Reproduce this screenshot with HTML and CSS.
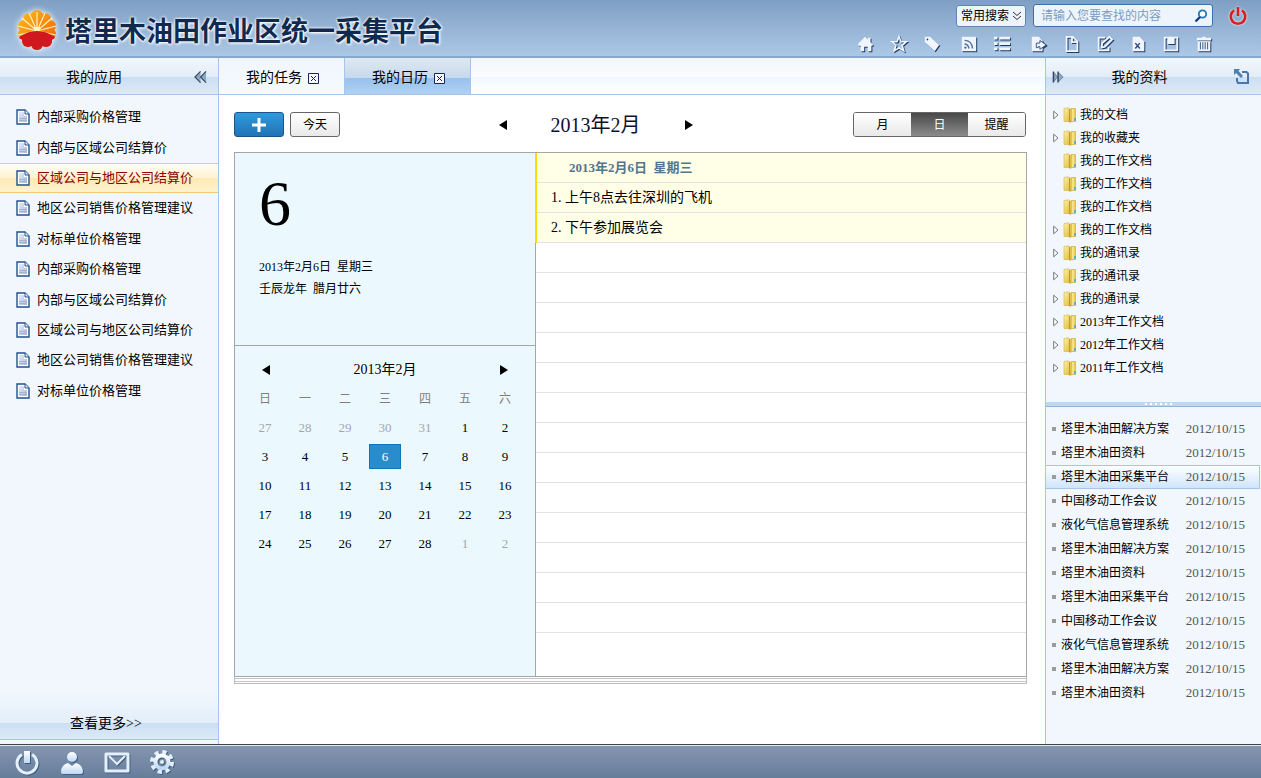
FILE: index.html
```html
<!DOCTYPE html>
<html lang="zh-CN">
<head>
  <meta charset="UTF-8">
  <meta name="viewport" content="width=device-width, initial-scale=1.0">
  <title>塔里木油田作业区统一采集平台</title>
  <link rel="stylesheet" href="styles.css">
</head>
<body>
<svg class="defs" aria-hidden="true">
  <linearGradient id="g-doc" x1="0" y1="0" x2="1" y2="1">
    <stop offset="0" stop-color="#e6ecf6"/><stop offset="1" stop-color="#a9b9d5"/>
  </linearGradient>
  <linearGradient id="g-folder" x1="0" y1="0" x2="1" y2="1">
    <stop offset="0" stop-color="#fff3a8"/><stop offset="1" stop-color="#d9b52c"/>
  </linearGradient>
  <linearGradient id="g-orange" gradientUnits="userSpaceOnUse" x1="8" y1="3" x2="40" y2="34">
    <stop offset="0" stop-color="#ffb81c"/><stop offset="1" stop-color="#f0690a"/>
  </linearGradient>
  <linearGradient id="g-foot" x1="0" y1="0" x2="0" y2="1">
    <stop offset="0" stop-color="#fff"/><stop offset="1" stop-color="#bcd8f5"/>
  </linearGradient>
  <clipPath id="sun">
    <path d="M2 46V35Q5 29 9 28 16 24 23 24t14 4q4 1 7 7v11z"/>
  </clipPath>
  <g id="petals">
    <circle cx="23" cy="23" r="15"/>
    <circle cx="23" cy="9" r="6"/><circle cx="31" cy="12" r="6"/><circle cx="15" cy="12" r="6"/>
    <circle cx="36" cy="19" r="6"/><circle cx="10" cy="19" r="6"/><circle cx="36" cy="27" r="6"/><circle cx="10" cy="27" r="6"/>
    <circle cx="32" cy="34" r="6"/><circle cx="14" cy="34" r="6"/><circle cx="23" cy="37" r="6"/>
  </g>
  <symbol id="doc" viewBox="0 0 14 16">
    <path d="M1 1h8l4 4v10H1z" fill="#fff" stroke="#22508c" stroke-width="1.4"/>
    <path d="M3 3h5v4h3v6H3z" fill="url(#g-doc)"/>
    <path d="M9 1v4h4" fill="#e6eefa" stroke="#22508c"/>
    <path d="M3 9.500h8M3 11.500h8" stroke="#a3b5d0"/>
  </symbol>
  <symbol id="folder" viewBox="0 0 14 16">
    <path d="M8 1.500h4.500v13H7z" fill="#e8cd58" stroke="#c9a53a" stroke-width=".6"/>
    <path d="M10 2v12" stroke="#fff6bd"/>
    <path d="M1 1.500 5.500.8 8 3v12.500L5 14.500H1z" fill="url(#g-folder)" stroke="#d2b04a" stroke-width=".6"/>
    <path d="M6.500 2v13" stroke="#c39a2a"/>
    <path d="M12 11v3" stroke="#3ba4e8" stroke-width="1.500"/>
  </symbol>
  <symbol id="arrow" viewBox="0 0 6 10">
    <path d="M.7 1.200v7.600L5 5z" fill="#fff" stroke="#777"/>
  </symbol>
  <symbol id="close" viewBox="0 0 11 11">
    <path d="M.5.5h10v10H.5z" fill="#f4f8ff" stroke="#1c2460"/>
    <path d="M3 3l5 5M8 3 3 8" stroke="#1c2460"/>
  </symbol>
</svg>

<header class="header">
  <div class="brand">
    <svg class="logo" viewBox="0 0 46 46">
      <use href="#petals" fill="url(#g-orange)"/>
      <g stroke="#fff3c0" stroke-width="1.200">
        <path d="M23 24V5M23 24 15 6M23 24 31 6M23 24 8 11M23 24 38 11M23 24 4 19M23 24 42 19M23 24 4 28M23 24 42 28"/>
      </g>
      <path d="M23 25l-4-5h8z" fill="#fff3c0"/>
      <use href="#petals" fill="#cf1820" clip-path="url(#sun)"/>
    </svg>
    <h1>塔里木油田作业区统一采集平台</h1>
  </div>
  <div class="tools">
    <form class="search" onsubmit="return false;">
      <div class="select-box">
        <select aria-label="搜索类型"><option>常用搜索</option></select>
        <svg viewBox="0 0 10 10"><path d="M1 1l4 3.500L9 1M1 5l4 3.500L9 5" fill="none" stroke="#333"/></svg>
      </div>
      <div class="search-box">
        <input type="text" aria-label="搜索" placeholder="请输入您要查找的内容">
        <button type="submit" aria-label="查找">
          <svg viewBox="0 0 14 14"><circle cx="8.500" cy="5" r="3.700" fill="#fff" stroke="#2277bb" stroke-width="1.800"/><path d="M6 8l-4.500 4.500" stroke="#16407c" stroke-width="2.400"/></svg>
        </button>
      </div>
      <button class="logout" aria-label="退出">
        <svg viewBox="0 0 18 18"><path d="M5.500 4a6.500 6.500 0 1 0 7 0" fill="none" stroke="#d81e1e" stroke-width="2.400"/><path d="M9 1v8" stroke="#d81e1e" stroke-width="2.400"/></svg>
      </button>
    </form>
    <nav class="icons">
      <div class="group">
        <button aria-label="首页"><svg viewBox="0 0 20 20"><path d="M1 10 9 2l3 3V3h3v5l3 3-1 1h-1v6h-4v-5H8v5H4v-6H2z"/></svg></button>
        <button aria-label="收藏"><svg viewBox="0 0 20 20"><path d="M10 2l2.300 5.500H18l-4.500 4 1.700 6L10 14.300 4.800 17.500l1.700-6L2 7.500h5.700z" fill="none" stroke="#f0f5fc" stroke-width="1.800"/></svg></button>
        <button aria-label="标签"><svg viewBox="0 0 20 20"><path fill-rule="evenodd" d="M2 2h6l10 9-5 7L2 8zM5 4a1 1 0 1 0 1 1A1 1 0 0 0 5 4z"/></svg></button>
      </div>
      <div class="group">
        <button aria-label="订阅"><svg viewBox="0 0 20 20"><path d="M2 2h16v16H2z"/><path d="M5 6q8 0 9 9M5 10q4 0 5 5" fill="none" stroke="#54749f" stroke-width="1.600"/><circle cx="6" cy="14" r="1.300" fill="#54749f"/></svg></button>
        <button aria-label="列表"><svg viewBox="0 0 20 20"><path d="M1 2h4v3H1zM7 2h12v3H7zM1 8h4v3H1zM7 8h12v3H7zM1 14h4v3H1zM7 14h12v3H7z"/></svg></button>
      </div>
      <div class="group">
        <button aria-label="导出"><svg viewBox="0 0 20 20"><path d="M2 2h8l4 4v12H2z"/><path d="M7 14V9h4V6l7 5-7 5v-3H9v1z" stroke="#2b4a78"/></svg></button>
        <button aria-label="新建"><svg viewBox="0 0 20 20"><path d="M4 2h7l5 5v11H4z" fill="none" stroke="#f0f5fc" stroke-width="2"/><path d="M10 2v6h6" fill="none" stroke="#f0f5fc" stroke-width="2"/></svg></button>
        <button aria-label="编辑"><svg viewBox="0 0 20 20"><path d="M10 3H3v14h11v-4" fill="none" stroke="#f0f5fc" stroke-width="2"/><path d="M7 9l8-7 3 3-8 8-4 1z" fill="none" stroke="#f0f5fc" stroke-width="2"/></svg></button>
        <button aria-label="表格"><svg viewBox="0 0 20 20"><path d="M4 2h8l5 5v11H4z"/><path d="M7 9l5 6M12 9l-5 6" stroke="#2b4a78" stroke-width="1.600"/></svg></button>
        <button aria-label="保存"><svg viewBox="0 0 20 20"><path fill-rule="evenodd" d="M2 2h16v16H2zM4 4v12h12V4h-2v6H6V4z"/><path d="M8 2h2v6H8z"/></svg></button>
        <button aria-label="删除"><svg viewBox="0 0 20 20"><path d="M2 3h6V2h4v1h6v3H2zM3 7h14v11H3z"/><path d="M6 8v8M8.700 8v8M11.300 8v8M14 8v8" stroke="#2b4a78"/></svg></button>
      </div>
    </nav>
  </div>
</header>

<div class="layout">
  <aside class="apps">
    <div class="bar">
      <h2>我的应用</h2>
      <button class="bar-right" aria-label="收起"><svg class="fold" viewBox="0 0 14 12"><path d="M7 0v12L1 6zM13 0v12L7 6z" fill="#8fa8c4"/><path d="M7 0 1 6l6 6M13 0 7 6l6 6" fill="none" stroke="#34465c" stroke-width="1.200"/></svg></button>
    </div>
    <ul class="app-list">
      <li><a href="#"><svg><use href="#doc"/></svg>内部采购价格管理</a></li>
      <li><a href="#"><svg><use href="#doc"/></svg>内部与区域公司结算价</a></li>
      <li class="active"><a href="#"><svg><use href="#doc"/></svg>区域公司与地区公司结算价</a></li>
      <li><a href="#"><svg><use href="#doc"/></svg>地区公司销售价格管理建议</a></li>
      <li><a href="#"><svg><use href="#doc"/></svg>对标单位价格管理</a></li>
      <li><a href="#"><svg><use href="#doc"/></svg>内部采购价格管理</a></li>
      <li><a href="#"><svg><use href="#doc"/></svg>内部与区域公司结算价</a></li>
      <li><a href="#"><svg><use href="#doc"/></svg>区域公司与地区公司结算价</a></li>
      <li><a href="#"><svg><use href="#doc"/></svg>地区公司销售价格管理建议</a></li>
      <li><a href="#"><svg><use href="#doc"/></svg>对标单位价格管理</a></li>
    </ul>
    <a class="more" href="#">查看更多&gt;&gt;</a>
  </aside>

  <main class="main">
    <nav class="tabs">
      <div class="tab"><a href="#">我的任务</a><button aria-label="关闭"><svg><use href="#close"/></svg></button></div>
      <div class="tab active"><a href="#">我的日历</a><button aria-label="关闭"><svg><use href="#close"/></svg></button></div>
    </nav>
    <div class="content">
      <div class="toolbar">
        <div class="left">
          <button class="btn add" aria-label="添加"><svg viewBox="0 0 14 14"><path d="M7 0v14M0 7h14" stroke="#fff" stroke-width="3"/></svg></button>
          <button class="btn">今天</button>
        </div>
        <div class="month">
          <button aria-label="上个月"><svg viewBox="0 0 8 10"><path d="M8 0v10L0 5z"/></svg></button>
          <span>2013年2月</span>
          <button aria-label="下个月"><svg viewBox="0 0 8 10"><path d="M0 0v10l8-5z"/></svg></button>
        </div>
        <div class="views">
          <button>月</button><button class="active">日</button><button>提醒</button>
        </div>
      </div>

      <div class="book">
        <section class="side">
          <div class="today">
            <div class="day">6</div>
            <p>2013年2月6日&nbsp; 星期三</p>
            <p>壬辰龙年&nbsp; 腊月廿六</p>
          </div>
          <div class="mini">
            <div class="mini-nav">
              <button aria-label="上个月"><svg viewBox="0 0 8 10"><path d="M8 0v10L0 5z"/></svg></button>
              <span>2013年2月</span>
              <button aria-label="下个月"><svg viewBox="0 0 8 10"><path d="M0 0v10l8-5z"/></svg></button>
            </div>
            <table>
              <thead>
                <tr><th>日</th><th>一</th><th>二</th><th>三</th><th>四</th><th>五</th><th>六</th></tr>
              </thead>
              <tbody>
                <tr><td class="out">27</td><td class="out">28</td><td class="out">29</td><td class="out">30</td><td class="out">31</td><td>1</td><td>2</td></tr>
                <tr><td>3</td><td>4</td><td>5</td><td><span class="selected">6</span></td><td>7</td><td>8</td><td>9</td></tr>
                <tr><td>10</td><td>11</td><td>12</td><td>13</td><td>14</td><td>15</td><td>16</td></tr>
                <tr><td>17</td><td>18</td><td>19</td><td>20</td><td>21</td><td>22</td><td>23</td></tr>
                <tr><td>24</td><td>25</td><td>26</td><td>27</td><td>28</td><td class="out">1</td><td class="out">2</td></tr>
              </tbody>
            </table>
          </div>
        </section>
        <section class="agenda">
          <div class="events">
            <h3>2013年2月6日&nbsp; 星期三</h3>
            <p>1. 上午8点去往深圳的飞机</p>
            <p>2. 下午参加展览会</p>
          </div>
        </section>
      </div>
      <div class="pages"></div>
    </div>
  </main>

  <aside class="files">
    <div class="bar">
      <button class="bar-left" aria-label="展开"><svg class="fold" viewBox="0 0 14 12"><path d="M2 1v10l4-5zM7 1v10l5-5z" fill="#8fa8c4" stroke="#5d7896" stroke-width=".8"/><path d="M1.500 0v12M6.500 0v12" stroke="#34465c" stroke-width="1.500"/></svg></button>
      <h2>我的资料</h2>
      <button class="bar-right" aria-label="弹出"><svg class="popout" viewBox="0 0 16 16"><path d="M8 3h4.500l1.500 1.500V14H4L3 12V9" fill="none" stroke="#4878ab" stroke-width="2"/><path d="M0 0h6L4.500 2 9 7 7 9 2 4 0 6z" fill="#4f80b3"/></svg></button>
    </div>
    <ul class="tree">
      <li><svg class="twig"><use href="#arrow"/></svg><svg class="folder"><use href="#folder"/></svg><a href="#">我的文档</a></li>
      <li><svg class="twig"><use href="#arrow"/></svg><svg class="folder"><use href="#folder"/></svg><a href="#">我的收藏夹</a></li>
      <li><svg class="twig"></svg><svg class="folder"><use href="#folder"/></svg><a href="#">我的工作文档</a></li>
      <li><svg class="twig"></svg><svg class="folder"><use href="#folder"/></svg><a href="#">我的工作文档</a></li>
      <li><svg class="twig"></svg><svg class="folder"><use href="#folder"/></svg><a href="#">我的工作文档</a></li>
      <li><svg class="twig"><use href="#arrow"/></svg><svg class="folder"><use href="#folder"/></svg><a href="#">我的工作文档</a></li>
      <li><svg class="twig"><use href="#arrow"/></svg><svg class="folder"><use href="#folder"/></svg><a href="#">我的通讯录</a></li>
      <li><svg class="twig"><use href="#arrow"/></svg><svg class="folder"><use href="#folder"/></svg><a href="#">我的通讯录</a></li>
      <li><svg class="twig"><use href="#arrow"/></svg><svg class="folder"><use href="#folder"/></svg><a href="#">我的通讯录</a></li>
      <li><svg class="twig"><use href="#arrow"/></svg><svg class="folder"><use href="#folder"/></svg><a href="#">2013年工作文档</a></li>
      <li><svg class="twig"><use href="#arrow"/></svg><svg class="folder"><use href="#folder"/></svg><a href="#">2012年工作文档</a></li>
      <li><svg class="twig"><use href="#arrow"/></svg><svg class="folder"><use href="#folder"/></svg><a href="#">2011年工作文档</a></li>
    </ul>
    <div class="splitter"><i></i><i></i><i></i><i></i><i></i><i></i></div>
    <ul class="news">
      <li><a href="#">塔里木油田解决方案</a><time>2012/10/15</time></li>
      <li><a href="#">塔里木油田资料</a><time>2012/10/15</time></li>
      <li class="active"><a href="#">塔里木油田采集平台</a><time>2012/10/15</time></li>
      <li><a href="#">中国移动工作会议</a><time>2012/10/15</time></li>
      <li><a href="#">液化气信息管理系统</a><time>2012/10/15</time></li>
      <li><a href="#">塔里木油田解决方案</a><time>2012/10/15</time></li>
      <li><a href="#">塔里木油田资料</a><time>2012/10/15</time></li>
      <li><a href="#">塔里木油田采集平台</a><time>2012/10/15</time></li>
      <li><a href="#">中国移动工作会议</a><time>2012/10/15</time></li>
      <li><a href="#">液化气信息管理系统</a><time>2012/10/15</time></li>
      <li><a href="#">塔里木油田解决方案</a><time>2012/10/15</time></li>
      <li><a href="#">塔里木油田资料</a><time>2012/10/15</time></li>
    </ul>
  </aside>
</div>

<footer class="footer">
  <button aria-label="注销"><svg viewBox="0 0 26 26"><path d="M8 4.500a10 10 0 1 0 10 0" fill="none" stroke="#e4effb" stroke-width="3"/><path d="M10 1h6v12h-6z" fill="url(#g-foot)"/></svg></button>
  <button aria-label="用户"><svg viewBox="0 0 26 26"><circle cx="13" cy="7" r="5" fill="url(#g-foot)"/><path d="M2 22q0-7 7-9l4 3 4-3q7 2 7 9 0 2-2 2H4q-2 0-2-2z" fill="url(#g-foot)"/></svg></button>
  <button aria-label="邮件"><svg viewBox="0 0 26 26"><path d="M2 4h22v17H2z" fill="none" stroke="#e4effb" stroke-width="3" stroke-linejoin="round"/><path d="M5 6l8 8 8-8" fill="none" stroke="#e4effb" stroke-width="2"/></svg></button>
  <button aria-label="设置"><svg viewBox="0 0 26 26"><circle cx="13" cy="12" r="10" fill="none" stroke="#e4effb" stroke-width="4" stroke-dasharray="4.200 3.654"/><circle cx="13" cy="12" r="6.500" fill="none" stroke="url(#g-foot)" stroke-width="4"/><circle cx="13" cy="12" r="2" fill="#e4effb"/></svg></button>
</footer>
</body>
</html>
```

FILE: styles.css
```css
* {
  box-sizing: border-box;
}
body {
  display: flex;
  flex-direction: column;
  margin: 0;
  min-height: 100vh;
  font: 12px/20px "Liberation Serif", "Noto Sans CJK SC", serif;
  color: #000;
  background-color: #fff;
}
h1, h2, h3, p, ul {
  margin: 0;
  padding: 0;
  list-style: none;
}
a {
  color: inherit;
  text-decoration: none;
}
button {
  padding: 0;
  border: none;
  background: none;
  font: inherit;
  cursor: pointer;
}
svg {
  display: block;
  flex: none;
}
.defs {
  position: absolute;
  width: 0;
  height: 0;
}

/* header */
.header {
  display: flex;
  justify-content: space-between;
  height: 58px;
  border-bottom: 2px solid #86a8cd;
  background: linear-gradient(#7e9fc3, #adc8e7);
}
.brand {
  display: flex;
  align-items: center;
  gap: 5px;
  padding: 4px 0 0 14px;
}
.logo {
  width: 46px;
  height: 46px;
  filter: drop-shadow(0 0 3px #fff);
}
.brand h1 {
  padding-top: 4px;
  font-size: 27px;
  line-height: 40px;
  font-weight: bold;
  white-space: nowrap;
  color: #10294f;
  text-shadow: 0 0 2px #fff, 0 0 3px #fff, 1px 1px 3px #fff;
}
.tools {
  display: flex;
  flex-direction: column;
  gap: 8px;
  padding-top: 4px;
}
.search {
  display: flex;
  align-items: center;
  justify-content: flex-end;
  gap: 7px;
  padding-right: 13px;
}
.select-box {
  position: relative;
}
.select-box svg {
  position: absolute;
  right: 4px;
  top: 6px;
  width: 10px;
  height: 10px;
  pointer-events: none;
}
.select-box select {
  display: block;
  width: 70px;
  height: 22px;
  padding: 0 4px;
  appearance: none;
  border: 1px solid #5f86b3;
  border-radius: 3px;
  background-color: #eef4fc;
  color: #000;
  font: inherit;
}
.search-box {
  display: flex;
  align-items: center;
  width: 180px;
  height: 23px;
  padding: 0 4px 0 7px;
  border: 1px solid #3d6ea5;
  border-radius: 3px;
  background-color: #eef4fc;
}
.search-box input {
  flex: 1;
  min-width: 0;
  padding: 0;
  border: none;
  outline: none;
  background: none;
  font: inherit;
}
.search-box input::placeholder {
  color: #7c9cbf;
}
.search-box svg {
  width: 14px;
  height: 14px;
}
.logout {
  margin-left: 8px;
}
.logout svg {
  width: 20px;
  height: 20px;
  filter: drop-shadow(0 0 1px #fff);
}
.icons {
  display: flex;
  gap: 17px;
  padding-right: 47px;
}
.group {
  display: flex;
  gap: 13px;
}
.group svg {
  width: 20px;
  height: 18px;
  fill: #f0f5fc;
  filter: drop-shadow(1px 1px 0 #1f3a66);
}

/* columns */
.layout {
  flex: 1;
  display: flex;
}
.bar {
  position: relative;
  height: 37px;
  border-bottom: 1px solid #a5c6ea;
  background: linear-gradient(#f1f6fc, #e3edf8 52%, #cadef3 52%, #deeaf7);
}
.bar h2 {
  font-size: 14px;
  line-height: 40px;
  font-weight: normal;
  text-align: center;
}
.bar-left, .bar-right {
  position: absolute;
  top: 11px;
}
.bar-left {
  left: 6px;
}
.bar-right {
  right: 11px;
}
.fold {
  width: 13px;
  height: 16px;
}
.popout {
  width: 16px;
  height: 16px;
}

/* left */
.apps {
  display: flex;
  flex-direction: column;
  width: 219px;
  border-right: 1px solid #a5c6ea;
  background-color: #f2f7fe;
}
.apps h2 {
  padding-right: 30px;
}
.app-list {
  display: grid;
  grid-auto-rows: 1fr;
  height: 304px;
  margin-top: 7px;
}
.app-list li {
  display: flex;
  align-items: center;
  border: solid transparent;
  border-width: 1px 0;
}
.app-list a {
  display: flex;
  align-items: center;
  gap: 7px;
  padding-left: 16px;
  font-size: 13px;
}
.app-list svg {
  width: 14px;
  height: 16px;
}
.app-list .active {
  border-color: #f0c878;
  background: linear-gradient(#fffdf5, #fff2d2 50%, #fde9b4 50%, #fff3cc);
  color: #8b0000;
}
.more {
  margin-top: auto;
  margin-bottom: 4px;
  padding: 21px 6px 3px 0;
  border-bottom: 1px solid #a5c6ea;
  background: linear-gradient(#f2f7fe, #e3eef9 66%, #cadff3 66%, #dce9f7);
  font-size: 14px;
  line-height: 24px;
  text-align: center;
}

/* center */
.main {
  flex: 1;
  display: flex;
  flex-direction: column;
}
.tabs {
  display: flex;
  height: 37px;
  border-bottom: 1px solid #a5c6ea;
  background: linear-gradient(#f3f6f8, #fafcfe 52%, #f1f8ff 52%, #fff);
}
.tab {
  display: flex;
  align-items: center;
  justify-content: center;
  gap: 6px;
  width: 126px;
  padding: 4px 0 0 2px;
  border-right: 1px solid #a5c6ea;
  background: linear-gradient(#f0f6fc, #f6fafe);
  font-size: 14px;
}
.tab.active {
  background: linear-gradient(#e0e8f1, #c6d9ee 55%, #98c1ee 55%, #b0d1f4);
}
.tab svg {
  width: 11px;
  height: 11px;
}
.content {
  flex: 1;
  display: flex;
  flex-direction: column;
  padding: 17px 18px 60px 15px;
}
.toolbar {
  display: grid;
  grid-template-columns: 1fr auto 1fr;
  align-items: center;
  margin-bottom: 15px;
}
.left {
  display: flex;
  gap: 6px;
}
.btn {
  display: flex;
  align-items: center;
  justify-content: center;
  width: 50px;
  height: 25px;
  border: 1px solid #666;
  border-radius: 3px;
  background: linear-gradient(#fff, #e9e9ea);
}
.btn.add {
  border-color: #1a5488;
  background: linear-gradient(#2f9ade, #2173b4);
}
.btn svg {
  width: 14px;
  height: 14px;
}
.month {
  display: flex;
  align-items: center;
  gap: 44px;
  margin-right: 70px;
  font-size: 20px;
  color: #10102c;
}
.month svg, .mini-nav svg {
  width: 8px;
  height: 10px;
}
.views {
  display: flex;
  justify-self: end;
  height: 25px;
  margin-right: 1px;
  border: 1px solid #666;
  border-radius: 3px;
  overflow: hidden;
}
.views button {
  width: 57px;
  background: linear-gradient(#fff, #e9e9ea);
}
.views .active {
  background: linear-gradient(#484848, #8c8c8c);
  color: #fff;
}
.book {
  flex: 1;
  display: flex;
  border: 1px solid #a6a6a6;
}
.side {
  width: 301px;
  border-right: 1px solid #a6a6a6;
  background-color: #ebf9ff;
}
.today {
  height: 193px;
  padding: 12px 24px;
  border-bottom: 1px solid #a6a6a6;
  line-height: 22px;
}
.day {
  margin-bottom: 13px;
  font-size: 64px;
  line-height: 78px;
}
.mini {
  padding: 10px;
}
.mini-nav {
  display: flex;
  align-items: center;
  justify-content: space-between;
  padding: 4px 17px;
  font-size: 14px;
}
.mini table {
  width: 280px;
  border-collapse: collapse;
  table-layout: fixed;
  font-size: 13px;
  text-align: center;
}
.mini th {
  height: 29px;
  padding: 0;
  font-size: 12px;
  font-weight: normal;
  color: #857d7b;
}
.mini td {
  height: 29px;
  padding: 0;
}
.mini .out {
  color: #a6a6a6;
}
.selected {
  display: block;
  margin: 0 4px;
  border: 1px solid #0d75b8;
  background-color: #2b8ccb;
  color: #fff;
  line-height: 23px;
}
.agenda {
  flex: 1;
  background: repeating-linear-gradient(#fff 0 29px, #e2e2e6 29px 30px) no-repeat;
  background-size: 100% 480px;
}
/* the yellow edge covers the divider */
.events {
  margin-left: -1px;
  border-left: 2px solid #fadc00;
  background: repeating-linear-gradient(#fffee6 0 29px, #e2e2e6 29px 30px);
  font-size: 14px;
  line-height: 30px;
}
.events h3 {
  padding-left: 32px;
  font-size: 13px;
  line-height: 30px;
  color: #54758f;
}
.events p {
  padding-left: 14px;
}
.pages {
  height: 7px;
  border-right: 1px solid #bbb;
  border-left: 1px solid #bbb;
  background: repeating-linear-gradient(#fff 0 1px, #c4c4c4 1px 2px, #fff 2px 3px);
  border-bottom: 1px solid #bbb;
}

/* right */
.files {
  width: 216px;
  border-left: 1px solid #a5c6ea;
  background-color: #f2f7fe;
}
.files h2 {
  padding-right: 28px;
}
.tree {
  padding: 8px 0 23px 7px;
}
.tree li {
  display: flex;
  align-items: center;
  height: 23px;
}
.twig {
  width: 6px;
  height: 10px;
  margin-right: 4px;
}
.folder {
  width: 14px;
  height: 16px;
  margin-right: 3px;
}
.splitter {
  display: flex;
  justify-content: center;
  gap: 3px;
  height: 5px;
  padding: 1px 0 1px 10px;
  border-bottom: 1px solid #8fb3da;
  background-color: #c0d7ef;
}
.splitter i {
  width: 2px;
  height: 2px;
  background-color: #fff;
}
.news {
  padding: 10px 1px 0 0;
}
.news li {
  display: flex;
  align-items: center;
  height: 24px;
  padding: 0 14px 0 6px;
  border: 1px solid transparent;
  border-left: none;
}
.news li::before {
  content: "";
  width: 4px;
  height: 4px;
  margin-right: 5px;
  background-color: #9c9c9c;
}
.news time {
  margin-left: auto;
  font-size: 13px;
  color: #555;
}
.news .active {
  border-color: #a5c6ea;
  background: linear-gradient(#fff, #cfe4fb);
}

/* footer */
.footer {
  display: flex;
  align-items: center;
  gap: 19px;
  height: 34px;
  padding: 2px 14px 0;
  border-top: 1px solid #444;
  background: linear-gradient(#dcecf5 1px, #8596af 1px, #667d9b);
}
.footer svg {
  width: 26px;
  height: 26px;
  filter: drop-shadow(1px 1px 0 #3d5f85);
}
```
